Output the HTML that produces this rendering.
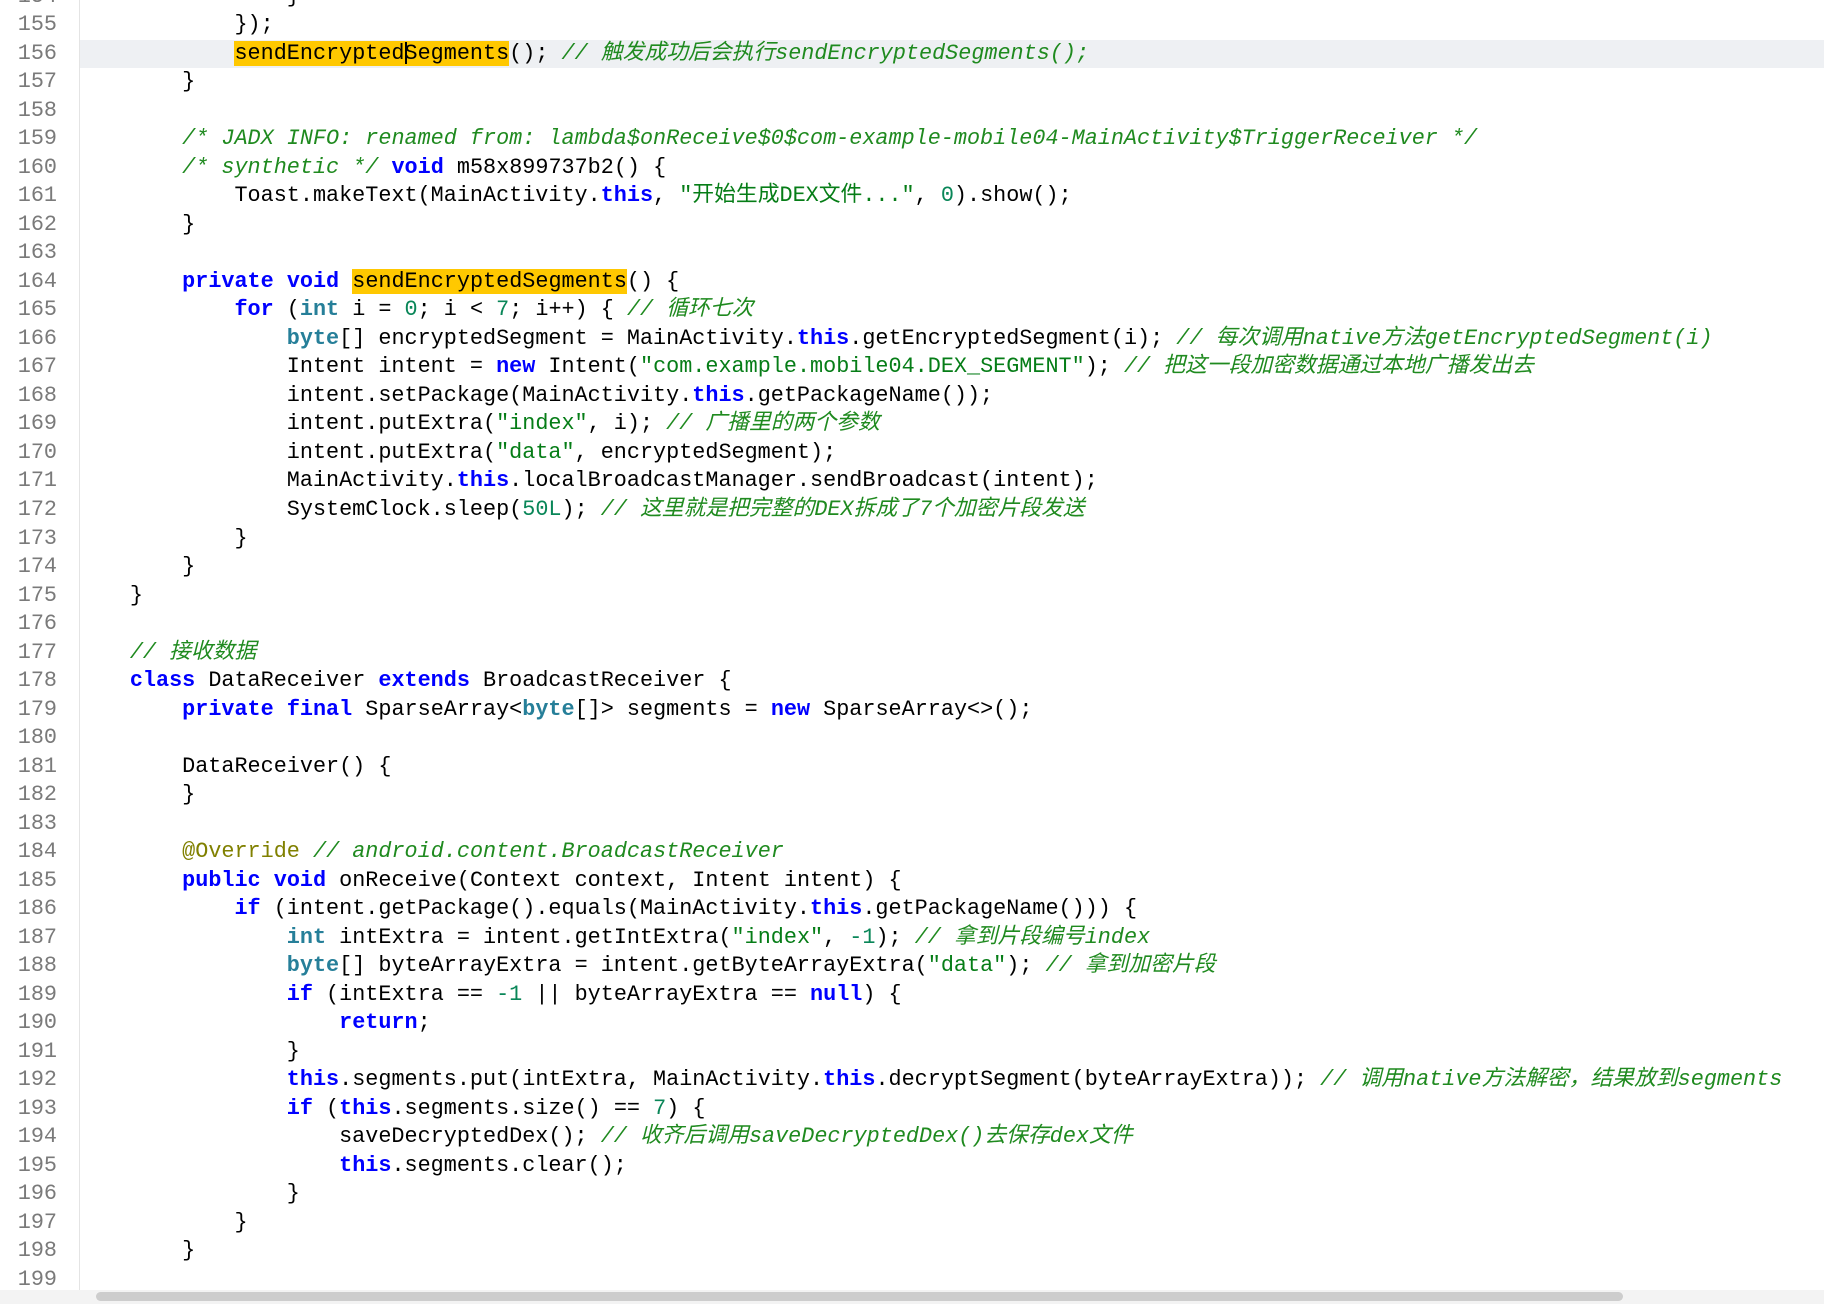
<!DOCTYPE html>
<html><head><meta charset="utf-8"><style>
html,body{margin:0;padding:0;background:#fff;width:1824px;height:1304px;overflow:hidden;position:relative}
.g{position:absolute;left:0;top:0;width:79px;height:1290px;border-right:1px solid #e4e4e4;background:#fff}
.l{position:absolute;left:0;width:1824px;height:28.52px;line-height:28.52px;font-family:"Liberation Mono","Noto Sans CJK SC",monospace;font-size:21.8px;color:#000;white-space:pre}
.n{position:absolute;left:0;width:57px;text-align:right;color:#7a7a7a}
.t{position:absolute;left:77.5px}
.hl{background:#eef0f3;left:80px;width:1744px}
.k{color:#0000ff;font-weight:bold}
.y{color:#267f99;font-weight:bold}
.u{color:#098658}
.s{color:#067d17}
.c{color:#1f8a1f;font-style:italic}
.a{color:#808000}
.h{background:#ffc800}
.sb{position:absolute;left:0;top:1290px;width:1824px;height:14px;background:#f3f3f3}
.th{position:absolute;left:96px;top:2px;width:1527px;height:9px;background:#cdcdcd;border-radius:5px}
.cur{display:inline-block;width:2px;height:22px;background:#000;vertical-align:middle;margin-right:-2px}
</style></head><body>
<div class="g"></div>
<div class="l hl" style="top:39.7px"></div>
<div class="l" style="top:-17.3px"><span class="n">154</span><span class="t">                }</span></div>
<div class="l" style="top:11.2px"><span class="n">155</span><span class="t">            });</span></div>
<div class="l" style="top:39.7px"><span class="n">156</span><span class="t">            <span class="h">sendEncrypted<span class="cur"></span>Segments</span>(); <span class="c">// 触发成功后会执行sendEncryptedSegments();</span></span></div>
<div class="l" style="top:68.3px"><span class="n">157</span><span class="t">        }</span></div>
<div class="l" style="top:96.8px"><span class="n">158</span></div>
<div class="l" style="top:125.3px"><span class="n">159</span><span class="t">        <span class="c">/* JADX INFO: renamed from: lambda$onReceive$0$com-example-mobile04-MainActivity$TriggerReceiver */</span></span></div>
<div class="l" style="top:153.8px"><span class="n">160</span><span class="t">        <span class="c">/* synthetic */</span> <span class="k">void</span> m58x899737b2() {</span></div>
<div class="l" style="top:182.3px"><span class="n">161</span><span class="t">            Toast.makeText(MainActivity.<span class="k">this</span>, <span class="s">"开始生成DEX文件..."</span>, <span class="u">0</span>).show();</span></div>
<div class="l" style="top:210.8px"><span class="n">162</span><span class="t">        }</span></div>
<div class="l" style="top:239.3px"><span class="n">163</span></div>
<div class="l" style="top:267.8px"><span class="n">164</span><span class="t">        <span class="k">private</span> <span class="k">void</span> <span class="h">sendEncryptedSegments</span>() {</span></div>
<div class="l" style="top:296.4px"><span class="n">165</span><span class="t">            <span class="k">for</span> (<span class="y">int</span> i = <span class="u">0</span>; i &lt; <span class="u">7</span>; i++) { <span class="c">// 循环七次</span></span></div>
<div class="l" style="top:324.9px"><span class="n">166</span><span class="t">                <span class="y">byte</span>[] encryptedSegment = MainActivity.<span class="k">this</span>.getEncryptedSegment(i); <span class="c">// 每次调用native方法getEncryptedSegment(i)</span></span></div>
<div class="l" style="top:353.4px"><span class="n">167</span><span class="t">                Intent intent = <span class="k">new</span> Intent(<span class="s">"com.example.mobile04.DEX_SEGMENT"</span>); <span class="c">// 把这一段加密数据通过本地广播发出去</span></span></div>
<div class="l" style="top:381.9px"><span class="n">168</span><span class="t">                intent.setPackage(MainActivity.<span class="k">this</span>.getPackageName());</span></div>
<div class="l" style="top:410.4px"><span class="n">169</span><span class="t">                intent.putExtra(<span class="s">"index"</span>, i); <span class="c">// 广播里的两个参数</span></span></div>
<div class="l" style="top:438.9px"><span class="n">170</span><span class="t">                intent.putExtra(<span class="s">"data"</span>, encryptedSegment);</span></div>
<div class="l" style="top:467.4px"><span class="n">171</span><span class="t">                MainActivity.<span class="k">this</span>.localBroadcastManager.sendBroadcast(intent);</span></div>
<div class="l" style="top:495.9px"><span class="n">172</span><span class="t">                SystemClock.sleep(<span class="u">50L</span>); <span class="c">// 这里就是把完整的DEX拆成了7个加密片段发送</span></span></div>
<div class="l" style="top:524.5px"><span class="n">173</span><span class="t">            }</span></div>
<div class="l" style="top:553.0px"><span class="n">174</span><span class="t">        }</span></div>
<div class="l" style="top:581.5px"><span class="n">175</span><span class="t">    }</span></div>
<div class="l" style="top:610.0px"><span class="n">176</span></div>
<div class="l" style="top:638.5px"><span class="n">177</span><span class="t">    <span class="c">// 接收数据</span></span></div>
<div class="l" style="top:667.0px"><span class="n">178</span><span class="t">    <span class="k">class</span> DataReceiver <span class="k">extends</span> BroadcastReceiver {</span></div>
<div class="l" style="top:695.5px"><span class="n">179</span><span class="t">        <span class="k">private</span> <span class="k">final</span> SparseArray&lt;<span class="y">byte</span>[]&gt; segments = <span class="k">new</span> SparseArray&lt;&gt;();</span></div>
<div class="l" style="top:724.0px"><span class="n">180</span></div>
<div class="l" style="top:752.6px"><span class="n">181</span><span class="t">        DataReceiver() {</span></div>
<div class="l" style="top:781.1px"><span class="n">182</span><span class="t">        }</span></div>
<div class="l" style="top:809.6px"><span class="n">183</span></div>
<div class="l" style="top:838.1px"><span class="n">184</span><span class="t">        <span class="a">@Override</span> <span class="c">// android.content.BroadcastReceiver</span></span></div>
<div class="l" style="top:866.6px"><span class="n">185</span><span class="t">        <span class="k">public</span> <span class="k">void</span> onReceive(Context context, Intent intent) {</span></div>
<div class="l" style="top:895.1px"><span class="n">186</span><span class="t">            <span class="k">if</span> (intent.getPackage().equals(MainActivity.<span class="k">this</span>.getPackageName())) {</span></div>
<div class="l" style="top:923.6px"><span class="n">187</span><span class="t">                <span class="y">int</span> intExtra = intent.getIntExtra(<span class="s">"index"</span>, <span class="u">-1</span>); <span class="c">// 拿到片段编号index</span></span></div>
<div class="l" style="top:952.1px"><span class="n">188</span><span class="t">                <span class="y">byte</span>[] byteArrayExtra = intent.getByteArrayExtra(<span class="s">"data"</span>); <span class="c">// 拿到加密片段</span></span></div>
<div class="l" style="top:980.7px"><span class="n">189</span><span class="t">                <span class="k">if</span> (intExtra == <span class="u">-1</span> || byteArrayExtra == <span class="k">null</span>) {</span></div>
<div class="l" style="top:1009.2px"><span class="n">190</span><span class="t">                    <span class="k">return</span>;</span></div>
<div class="l" style="top:1037.7px"><span class="n">191</span><span class="t">                }</span></div>
<div class="l" style="top:1066.2px"><span class="n">192</span><span class="t">                <span class="k">this</span>.segments.put(intExtra, MainActivity.<span class="k">this</span>.decryptSegment(byteArrayExtra)); <span class="c">// 调用native方法解密，结果放到segments</span></span></div>
<div class="l" style="top:1094.7px"><span class="n">193</span><span class="t">                <span class="k">if</span> (<span class="k">this</span>.segments.size() == <span class="u">7</span>) {</span></div>
<div class="l" style="top:1123.2px"><span class="n">194</span><span class="t">                    saveDecryptedDex(); <span class="c">// 收齐后调用saveDecryptedDex()去保存dex文件</span></span></div>
<div class="l" style="top:1151.7px"><span class="n">195</span><span class="t">                    <span class="k">this</span>.segments.clear();</span></div>
<div class="l" style="top:1180.2px"><span class="n">196</span><span class="t">                }</span></div>
<div class="l" style="top:1208.8px"><span class="n">197</span><span class="t">            }</span></div>
<div class="l" style="top:1237.3px"><span class="n">198</span><span class="t">        }</span></div>
<div class="l" style="top:1265.8px"><span class="n">199</span></div>
<div class="sb"><div class="th"></div></div>
</body></html>
